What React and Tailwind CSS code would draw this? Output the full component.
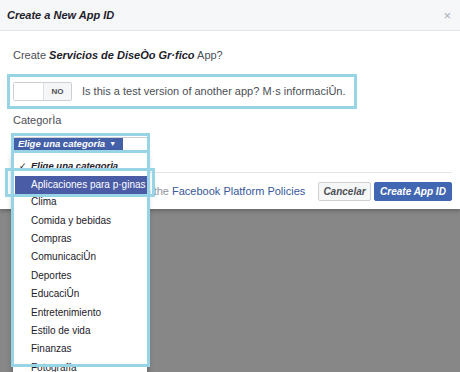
import React from "react";

const categories = [
  "Clima",
  "Comida y bebidas",
  "Compras",
  "ComunicaciÛn",
  "Deportes",
  "EducaciÛn",
  "Entretenimiento",
  "Estilo de vida",
  "Finanzas",
  "Fotografía",
];

function Toggle() {
  return (
    <div className="flex h-[19px] w-[59px] rounded-[2px] border border-[#ccd0d5] overflow-hidden">
      <div className="w-[30px] bg-white border-r border-[#dddfe2]" />
      <div className="flex-1 bg-[#f5f6f7] flex items-center justify-center text-[8px] font-bold text-[#4b4f56]">
        NO
      </div>
    </div>
  );
}

function Dropdown() {
  return (
    <div className="absolute left-[13px] top-[152px] w-[134px] h-[240px] bg-white shadow-[0_2px_6px_rgba(0,0,0,0.35)] pt-[4.5px] text-[10px] text-[#1d2129]">
      <div className="relative h-[18.4px] leading-[18.4px] pl-[18px] text-[9.5px] font-bold italic">
        <span className="absolute left-[6px] top-0 not-italic font-normal text-[9px]">✓</span>
        Elige una categorÌa
      </div>
      <div className="h-[18.4px] pt-[1px] pl-[2px]">
        <div className="h-[18px] bg-[#4a5ca6] text-white pl-[16px] leading-[18px]">
          Aplicaciones para p·ginas
        </div>
      </div>
      {categories.map((c) => (
        <div key={c} className="h-[18.4px] leading-[18.4px] pl-[18px]">
          {c}
        </div>
      ))}
    </div>
  );
}

export default function App() {
  return (
    <div
      className="relative w-[460px] h-[372px] overflow-hidden bg-[#878787]"
      style={{ fontFamily: '"Liberation Sans", Arial, sans-serif' }}
    >
      {/* modal */}
      <div className="bg-white shadow-[0_2px_4px_rgba(0,0,0,0.25)]">
        <div className="h-[31px] bg-[#f6f7f9] border-b border-[#e5e5e5] flex items-center justify-between pl-[7px] pr-[9px]">
          <span className="text-[11px] font-bold italic text-[#1d2129]">Create a New App ID</span>
          <span className="text-[13px] leading-none text-[#a8adb5]">×</span>
        </div>

        <div className="pl-[13px] pr-[8px]">
          <p className="mt-[17px] text-[11px] leading-[14px] text-[#4b4f56]">
            Create{" "}
            <span className="font-bold italic text-[#1d2129]">Servicios de DiseÒo Gr·fico</span>{" "}
            App?
          </p>

          <div className="mt-[12px] -ml-[6px] w-[350px] h-[35px] border-[3px] border-[#97d5e6] flex items-center pl-[3px]">
            <Toggle />
            <span className="ml-[10px] text-[11px] text-[#4b4f56]">
              Is this a test version of another app? M·s informaciÛn.
            </span>
          </div>

          <div className="mt-[4px] text-[11px] leading-[14px] text-[#4b4f56]">CategorÌa</div>

          <div className="mt-[10px] flex w-[135px] h-[15px] border border-[#ccd0d5] bg-white">
            <div className="w-[109px] h-full bg-[#4460a8] flex items-center pl-[4px] text-[9.5px] font-bold italic text-white whitespace-nowrap">
              Elige una categorÌa
              <span className="ml-[4px] text-[7px] not-italic">▼</span>
            </div>
          </div>

          <div className="mt-[20px] border-t border-[#e5e5e5] flex items-center justify-between pt-[9px] pb-[8px]">
            <span className="text-[11px] text-[#90949c] whitespace-nowrap">
              By proceeding, you agree to the{" "}
              <span className="text-[#365899]">Facebook Platform Policies</span>
            </span>
            <div className="flex gap-[3px]">
              <button className="h-[19px] w-[53px] rounded-[2px] border border-[#ced0d4] bg-[#f6f7f9] text-[10px] font-bold italic text-[#4b4f56]">
                Cancelar
              </button>
              <button className="h-[19px] w-[78px] rounded-[2px] border border-[#4267b2] bg-[#4267b2] text-[10px] font-bold italic text-white">
                Create App ID
              </button>
            </div>
          </div>
        </div>
      </div>

      <Dropdown />

      {/* highlight boxes */}
      <div className="absolute left-[11px] top-[133px] w-[139px] h-[234px] border-[3px] border-[#97d5e6]" />
      <div className="absolute left-[11px] top-[150px] w-[139px] h-[3px] bg-[#97d5e6]" />
      <div className="absolute left-[5px] top-[168px] w-[150px] h-[29px] border-[3px] border-[#97d5e6]" />
    </div>
  );
}
